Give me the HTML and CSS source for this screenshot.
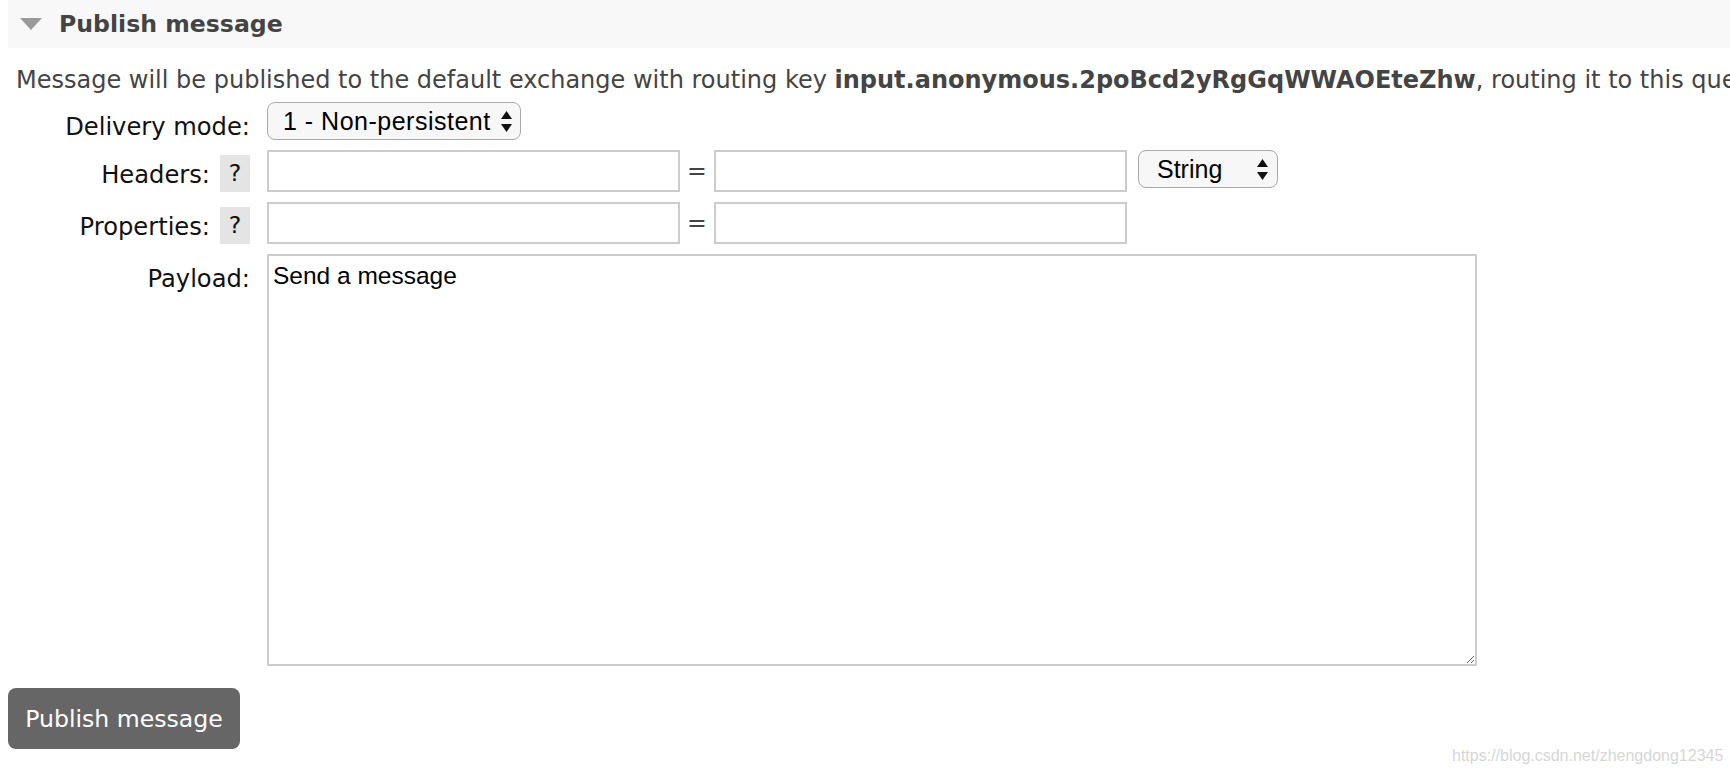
FILE: index.html
```html
<!DOCTYPE html>
<html lang="en">
<head>
<meta charset="utf-8">
<title>Publish message</title>
<link rel="stylesheet" href="styles.css">
</head>
<body>
<div class="section">
  <div class="section-head">
    <svg class="toggle" width="22" height="12" viewBox="0 0 22 12"><path d="M0 0 H22 L11 12 Z" fill="#9a9a9a"/></svg>
    <h2 class="section-title">Publish message</h2>
  </div>
  <p class="desc">Message will be published to the default exchange with routing key <b>input.anonymous.2poBcd2yRgGqWWAOEteZhw</b>, routing it to this queue.</p>
  <div class="form">
    <div class="label-cell"><span class="label">Delivery mode:</span></div>
    <div class="field-cell">
      <div class="select select-mode"><span>1 - Non-persistent</span>
        <svg class="arrows" width="11" height="21" viewBox="0 0 11 21"><path d="M5.5 0 L11 8 H0 Z M0 13 H11 L5.5 21 Z" fill="#111"/></svg>
      </div>
    </div>

    <div class="label-cell"><span class="label">Headers:</span><span class="help">?</span></div>
    <div class="field-cell">
      <div class="input"></div><span class="eq">=</span><div class="input"></div>
      <div class="select select-type"><span>String</span>
        <svg class="arrows" width="11" height="21" viewBox="0 0 11 21"><path d="M5.5 0 L11 8 H0 Z M0 13 H11 L5.5 21 Z" fill="#111"/></svg>
      </div>
    </div>

    <div class="label-cell"><span class="label">Properties:</span><span class="help">?</span></div>
    <div class="field-cell">
      <div class="input"></div><span class="eq">=</span><div class="input"></div>
    </div>

    <div class="label-cell"><span class="label">Payload:</span></div>
    <div class="field-cell">
      <textarea class="payload">Send a message</textarea>
    </div>
  </div>
  <button class="publish">Publish message</button>
</div>
<div class="watermark">https://blog.csdn.net/zhengdong12345</div>
</body>
</html>
```
FILE: styles.css
```css
html, body {
  margin: 0;
  padding: 0;
  background: #fff;
}
body {
  width: 1730px;
  height: 774px;
  overflow: hidden;
  position: relative;
  font-family: "DejaVu Sans", Verdana, sans-serif;
  font-size: 23.6px;
  color: #444;
}
.section {
  padding-left: 8px;
}
.section-head {
  height: 48px;
  background: #f8f8f8;
  display: flex;
  align-items: center;
  padding-left: 12px;
  gap: 17px;
}
.toggle {
  display: block;
  flex: none;
}
.section-title {
  margin: 0;
  font-size: 23.6px;
  font-weight: bold;
  color: #444;
  line-height: 28px;
}
.desc {
  margin: 18px 0 0 8px;
  font-size: 24px;
  line-height: 28px;
  white-space: nowrap;
  color: #444;
}
.desc b {
  color: #444;
}
.form {
  display: grid;
  grid-template-columns: 242px 1fr;
  column-gap: 17px;
  row-gap: 10px;
  margin-top: 8px;
}
.label-cell {
  display: flex;
  justify-content: flex-end;
  align-items: flex-start;
}
.label {
  color: #111;
  font-size: 24.2px;
  line-height: 24px;
  padding-top: 13px;
  white-space: nowrap;
}
.help {
  width: 30px;
  height: 37px;
  line-height: 37px;
  margin-top: 5px;
  margin-left: 10px;
  background: #e4e4e4;
  color: #111;
  text-align: center;
}
.field-cell {
  display: flex;
  align-items: flex-start;
}
.input {
  width: 409px;
  height: 38px;
  border: 2px solid #cccccc;
  background: #fff;
  flex: none;
}
.eq {
  width: 34px;
  text-align: center;
  line-height: 42px;
  color: #444;
}
.select {
  box-sizing: border-box;
  height: 38px;
  border: 1.5px solid #a9a9a9;
  border-radius: 8px;
  background: #f7f7f7;
  display: flex;
  align-items: center;
  justify-content: space-between;
  font-family: "Liberation Sans", Arial, sans-serif;
  font-size: 25px;
  color: #000;
  flex: none;
}
.select-mode {
  width: 254px;
  padding: 0 8px 0 15px;
}
.select-mode span {
  letter-spacing: 0.5px;
}
.select-type {
  width: 140px;
  margin-left: 11px;
  padding: 0 9px 0 18px;
}
.arrows {
  display: block;
  flex: none;
}
.payload {
  box-sizing: border-box;
  width: 1210px;
  height: 412px;
  border: 2px solid #cccccc;
  border-radius: 0;
  padding: 6px 4px;
  margin: 0;
  font-family: "Liberation Sans", Arial, sans-serif;
  font-size: 24.5px;
  line-height: 28px;
  color: #000;
  background: #fff;
  outline: none;
}
.publish {
  display: block;
  margin-top: 22px;
  width: 232px;
  height: 61px;
  border: 0;
  border-radius: 8px;
  background: #666;
  color: #fff;
  font-family: "DejaVu Sans", Verdana, sans-serif;
  font-size: 23.6px;
  padding: 0;
}
.watermark {
  position: absolute;
  left: 1452px;
  top: 746px;
  font-family: "Liberation Sans", Arial, sans-serif;
  font-size: 16px;
  line-height: 20px;
  color: #d6d6d6;
  white-space: nowrap;
}
```
